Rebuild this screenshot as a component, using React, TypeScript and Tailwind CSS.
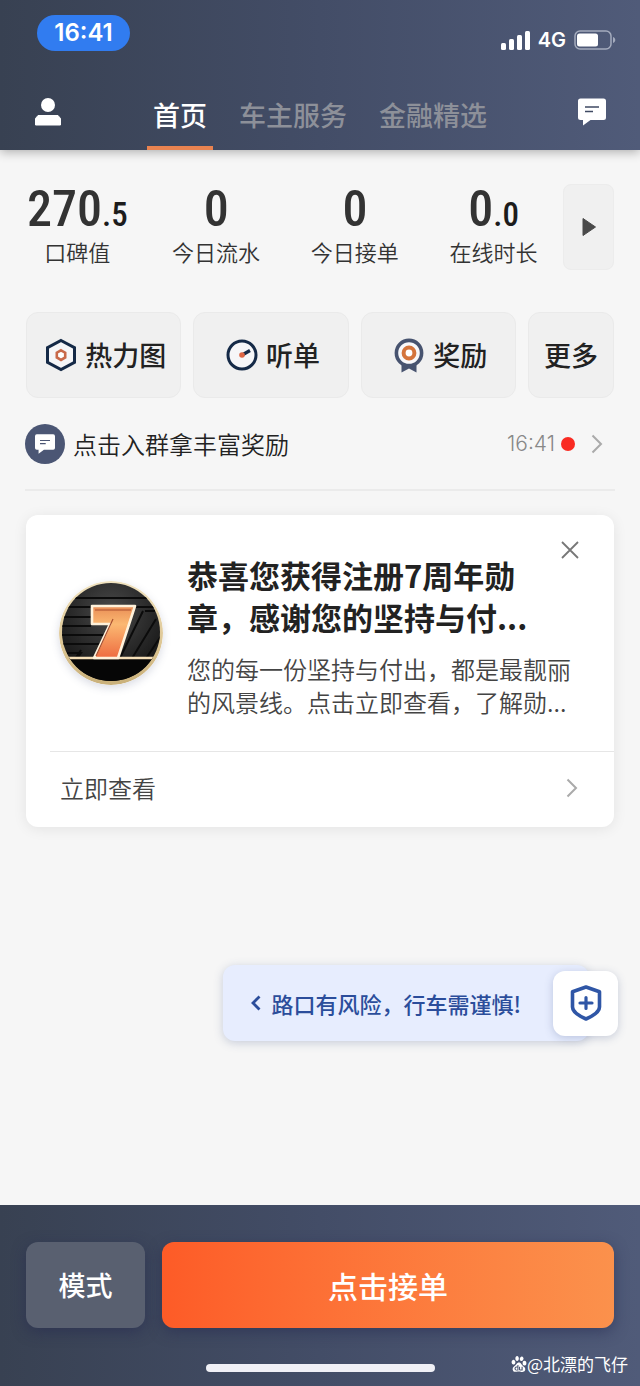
import type { ReactNode } from 'react'
import { SiBaidu } from 'react-icons/si'
import { clsx } from 'clsx'

interface Stat {
  label: string
  whole: string
  fraction?: string
}

const TABS = ['首页', '车主服务', '金融精选']

const STATS: Stat[] = [
  { label: '口碑值', whole: '270', fraction: '.5' },
  { label: '今日流水', whole: '0' },
  { label: '今日接单', whole: '0' },
  { label: '在线时长', whole: '0', fraction: '.0' },
]

function MessageIcon({ className, line }: { className?: string; line: string }) {
  return (
    <svg viewBox="0 0 28 28" className={className} aria-hidden="true">
      <path d="M2.500 0.500h23a2.500 2.500 0 0 1 2.500 2.500v16.500a2.500 2.500 0 0 1-2.500 2.500H12.500L5 27.500V22H2.500A2.500 2.500 0 0 1 0 19.500V3A2.500 2.500 0 0 1 2.500 0.500Z" fill="#fff" />
      <path d="M7 9h14M7 13.500h8" stroke={line} strokeWidth="1.500" />
    </svg>
  )
}

function Chevron({ className }: { className?: string }) {
  return (
    <svg viewBox="0 0 12 20" fill="none" stroke="currentColor" strokeWidth="2" className={className} aria-hidden="true">
      <path d="M1.500 1.500 10 10l-8.500 8.500" />
    </svg>
  )
}

function HeatIcon() {
  return (
    <svg viewBox="0 0 32 34" fill="none" className="h-[34px] w-8" aria-hidden="true">
      <path d="M16 2.500 29.500 9.700v14.600L16 31.500 2.500 24.300V9.700Z" stroke="#152a47" strokeWidth="3" fill="#f6f6f8" />
      <path d="m16 12.300 4.200 2.400v4.800L16 21.900l-4.200-2.400v-4.800Z" stroke="#c9694a" strokeWidth="2.600" fill="#fff" />
    </svg>
  )
}

function GaugeIcon() {
  return (
    <svg viewBox="0 0 32 32" fill="none" className="h-8 w-8" aria-hidden="true">
      <circle cx="16" cy="16" r="14" stroke="#152a47" strokeWidth="3" fill="#f6f6f8" />
      <path d="m17 15.500 7-4" stroke="#152a47" strokeWidth="3.400" />
      <circle cx="16" cy="16" r="2.800" fill="#dd6544" />
    </svg>
  )
}

function MedalIcon() {
  return (
    <svg viewBox="0 0 32 36" fill="none" className="h-9 w-8" aria-hidden="true">
      <path d="M8.500 25h15v10.500L16 31.500l-7.500 4Z" fill="#47536f" />
      <circle cx="16" cy="16" r="12.600" stroke="#47536f" strokeWidth="3.600" fill="#f8f8fa" />
      <circle cx="16" cy="16" r="5.400" stroke="#d4743c" strokeWidth="4" fill="#fff" />
    </svg>
  )
}

function AnniversaryBadge() {
  return (
    <svg viewBox="0 0 104 104" className="h-[104px] w-[104px] shrink-0 rounded-full shadow-[0_3px_8px_rgba(70,80,120,0.2)]" role="img" aria-label="7">
      <defs>
        <linearGradient id="seven" x1="0" y1="0" x2="0" y2="1">
          <stop offset="0" stopColor="#e98d55" />
          <stop offset="0.350" stopColor="#fbb872" />
          <stop offset="1" stopColor="#ee6c40" />
        </linearGradient>
        <linearGradient id="rim" x1="0" y1="0" x2="0" y2="1">
          <stop offset="0" stopColor="#f0e2bf" />
          <stop offset="0.600" stopColor="#ddc694" />
          <stop offset="1" stopColor="#c9b07a" />
        </linearGradient>
        <radialGradient id="face" cx="0.500" cy="0.300" r="0.600">
          <stop offset="0" stopColor="#4a4a4a" />
          <stop offset="0.600" stopColor="#2b2b2b" />
          <stop offset="1" stopColor="#181818" />
        </radialGradient>
        <clipPath id="disc">
          <circle cx="52" cy="51" r="49" />
        </clipPath>
      </defs>
      <circle cx="52" cy="52" r="52" fill="url(#rim)" />
      <g clipPath="url(#disc)">
        <path d="M0 0h104v104H0Z" fill="url(#face)" />
        <path d="M14 17h76M6 26h92M0 36h32M0 45h32M0 54h46M0 63h42M8 72h14l-5 7M22 69l-6 9M86 30h10M84 30 60 79M97 38 72 79M104 52 86 79" stroke="#0b0b0b" strokeWidth="2" fill="none" />
        <path d="M0 77h104v27H0Z" fill="#060606" />
        <path d="M0 77h104" stroke="#f5dfb8" strokeWidth="2.600" />
        <path d="M33 25h43L59 77H35l16-34H33Z" fill="url(#seven)" stroke="#fff2db" strokeWidth="2.600" strokeLinejoin="round" />
        <path d="M36 29h36M54 38 37 75" stroke="#a94f2f" strokeWidth="1.200" fill="none" />
      </g>
    </svg>
  )
}

function ShortcutButton({ icon, children }: { icon: ReactNode; children: ReactNode }) {
  return (
    <button type="button" className="flex h-[86px] flex-1 items-center justify-center gap-2 rounded-xl border border-[#eaeaea] bg-[#f0f0f0] pl-1 text-[27px] font-medium text-[#222]">
      {icon}
      {children}
    </button>
  )
}

function Header() {
  return (
    <header className="relative bg-gradient-to-r from-[#384152] via-[#434d67] to-[#505b79] text-white shadow-[0_2px_10px_rgba(0,0,0,0.3)]">
      <div className="flex h-20 items-center justify-between pr-6 pl-[37px]">
        <time className="mb-3.5 flex h-9 w-[93px] items-center justify-center rounded-full bg-[#317cf0] font-['Inter'] text-2xl font-semibold">
          16:41
        </time>
        <div className="flex items-center gap-2 font-['Inter'] text-xl font-semibold">
          <svg viewBox="0 0 30 19" className="h-[19px] w-[30px]" fill="#fff" aria-hidden="true">
            <rect x="1" y="12" width="5" height="7" rx="1.500" />
            <rect x="9" y="8" width="5" height="11" rx="1.500" />
            <rect x="17" y="4" width="5" height="15" rx="1.500" />
            <rect x="25" y="0" width="5" height="19" rx="1.500" />
          </svg>
          4G
          <svg viewBox="0 0 42 20" className="h-5 w-[42px]" aria-hidden="true">
            <rect x="1" y="1" width="36" height="18" rx="5" fill="none" stroke="#a4abbd" strokeWidth="1.500" />
            <rect x="3" y="3.500" width="21" height="13" rx="2.500" fill="#fff" />
            <path d="M39 7c3 1 3 5 0 6Z" fill="#a4abbd" />
          </svg>
        </div>
      </div>

      <nav className="flex h-[70px] items-stretch justify-between px-[34px]">
        <button type="button" aria-label="个人中心" className="pb-1.5">
          <svg viewBox="0 0 28 28" className="h-7 w-7" fill="#fff" aria-hidden="true">
            <circle cx="14" cy="7" r="7" />
            <path d="M4 17.500h20l2.500 3v6.500h-25v-6.500Z" stroke="#fff" strokeLinejoin="round" />
          </svg>
        </button>
        <div className="flex gap-5">
          {TABS.map((tab, i) => (
            <a
              key={tab}
              href="#"
              className={clsx(
                'flex items-center border-b-4 px-1.5 pt-1 text-[27px] font-medium',
                i === 0 ? 'border-[#e98350] text-white' : 'border-transparent text-[#8d9099]'
              )}
            >
              {tab}
            </a>
          ))}
        </div>
        <button type="button" aria-label="消息" className="pb-1.5">
          <MessageIcon className="h-7 w-7" line="#3f4a63" />
        </button>
      </nav>
    </header>
  )
}

function StatsRow() {
  return (
    <section className="flex items-center pr-[26px] pl-2">
      {STATS.map(stat => (
        <div key={stat.label} className="flex flex-1 flex-col items-center pb-2">
          <p className="flex h-14 items-baseline font-['Roboto_Condensed','Liberation_Sans_Narrow',sans-serif] text-[50px] leading-[56px] font-medium text-[#333]">
            {stat.whole}
            {stat.fraction && <span className="text-[33px] leading-8 text-[#1c1c1c]">{stat.fraction}</span>}
          </p>
          <p className="text-[22px] leading-7 font-[350] text-[#333]">{stat.label}</p>
        </div>
      ))}
      <button type="button" aria-label="展开" className="flex h-[86px] w-[51px] items-center justify-center rounded-lg border border-[#ececec] bg-[#f0f0f0]">
        <svg viewBox="0 0 14 18" className="h-[18px] w-3.5" fill="#4a4a4a" aria-hidden="true">
          <path d="M1 0.500 13.500 9 1 17.500Z" stroke="#4a4a4a" strokeLinejoin="round" />
        </svg>
      </button>
    </section>
  )
}

function RewardCard() {
  return (
    <article className="relative mx-[26px] mt-6 rounded-xl bg-white shadow-[0_2px_14px_rgba(0,0,0,0.08)]">
      <button type="button" aria-label="关闭" className="absolute top-[26px] right-[35px]">
        <svg viewBox="0 0 18 18" className="h-[18px] w-[18px]" stroke="#777" strokeWidth="1.800" aria-hidden="true">
          <path d="m1 1 16 16M17 1 1 17" />
        </svg>
      </button>
      <div className="flex h-[236px] items-center gap-6 pr-10 pl-[33px]">
        <AnniversaryBadge />
        <div className="flex-1 pt-1.5">
          <h2 className="text-[31px] leading-[42px] font-bold text-[#222]">
            恭喜您获得注册7周年勋章，感谢您的坚持与付...
          </h2>
          <p className="mt-3.5 text-2xl leading-[33px] font-[350] text-[#444]">
            您的每一份坚持与付出，都是最靓丽的风景线。点击立即查看，了解勋...
          </p>
        </div>
      </div>
      <a href="#" className="ml-6 flex h-[76px] items-center justify-between border-t border-[#e6e6e6] pr-9 pb-1 pl-2.5 text-2xl font-[350] text-[#444]">
        立即查看
        <Chevron className="h-5 w-3 text-[#aaa]" />
      </a>
    </article>
  )
}

function SafetyTip() {
  return (
    <div className="mt-[138px] mr-[22px] flex items-center self-end">
      <a href="#" className="flex h-[76px] items-center gap-2.5 rounded-xl bg-[#e7edfe] pr-[68px] pl-7 text-[22px] font-medium text-[#2b4d9b] shadow-[0_2px_10px_rgba(60,80,130,0.25)]">
        <svg viewBox="0 0 10 16" fill="none" stroke="currentColor" strokeWidth="2.800" className="h-4 w-2.5" aria-hidden="true">
          <path d="M8.500 1.500 2 8l6.500 6.500" />
        </svg>
        路口有风险，行车需谨慎!
      </a>
      <button type="button" aria-label="安全中心" className="relative -ml-9 flex h-[65px] w-[65px] items-center justify-center rounded-xl bg-white shadow-[0_2px_8px_rgba(60,80,130,0.25)]">
        <svg viewBox="0 0 32 36" fill="none" stroke="#2f56a6" strokeWidth="3.600" strokeLinejoin="round" strokeLinecap="round" className="h-9 w-8" aria-hidden="true">
          <path d="M16 2 29.500 6.800V22c0 5-5.500 8.500-13.500 12C8 30.500 2.500 27 2.500 22V6.800Z" />
          <path d="M16 12.500v11M10 18h12" strokeWidth="3.200" />
        </svg>
      </button>
    </div>
  )
}

function BottomBar() {
  return (
    <footer className="relative mt-auto flex flex-col bg-gradient-to-r from-[#384152] via-[#434d67] to-[#505b79] px-[26px] pt-[37px] pb-3.5 font-medium text-white">
      <div className="flex gap-[17px]">
        <button type="button" className="h-[86px] w-[119px] rounded-xl bg-[#596070] text-[27px] shadow-[0_4px_14px_rgba(35,40,80,0.5)]">
          模式
        </button>
        <button type="button" className="h-[86px] flex-1 rounded-xl bg-gradient-to-r from-[#fd5b27] to-[#fb914c] text-[30px] shadow-[0_4px_14px_rgba(35,40,80,0.5)]">
          点击接单
        </button>
      </div>
      <div className="mt-9 h-2 w-[229px] self-center rounded-full bg-[#f0f0f6]" />
      <p className="absolute right-3 bottom-2.5 flex items-center text-[17px] leading-6 font-normal">
        <SiBaidu className="h-4 w-4" />
        @北漂的飞仔
      </p>
    </footer>
  )
}

export default function App() {
  return (
    <div className="flex min-h-screen flex-col bg-[#f6f6f6] font-['Noto_Sans_CJK_SC',sans-serif]">
      <Header />
      <main className="flex flex-col pt-[31px]">
        <StatsRow />

        <section className="mx-[26px] mt-[39px] flex gap-3">
          <ShortcutButton icon={<HeatIcon />}>热力图</ShortcutButton>
          <ShortcutButton icon={<GaugeIcon />}>听单</ShortcutButton>
          <ShortcutButton icon={<MedalIcon />}>奖励</ShortcutButton>
          <button type="button" className="h-[86px] w-[86px] rounded-xl border border-[#eaeaea] bg-[#f0f0f0] text-[27px] font-medium text-[#222]">
            更多
          </button>
        </section>

        <a href="#" className="mx-[25px] flex h-[93px] items-center border-b-2 border-[#ebebeb] text-2xl font-[350] text-[#222]">
          <span className="mr-2 flex h-10 w-10 items-center justify-center rounded-full bg-[#4b5674]">
            <MessageIcon className="h-5 w-5" line="#4b5674" />
          </span>
          点击入群拿丰富奖励
          <time className="ml-auto font-['Inter'] text-[21px] text-[#888]">16:41</time>
          <span className="mr-4 ml-1.5 h-3.5 w-3.5 rounded-full bg-[#f92b22]" />
          <Chevron className="mr-3 h-5 w-3 text-[#aaa]" />
        </a>

        <RewardCard />
        <SafetyTip />
      </main>
      <BottomBar />
    </div>
  )
}
